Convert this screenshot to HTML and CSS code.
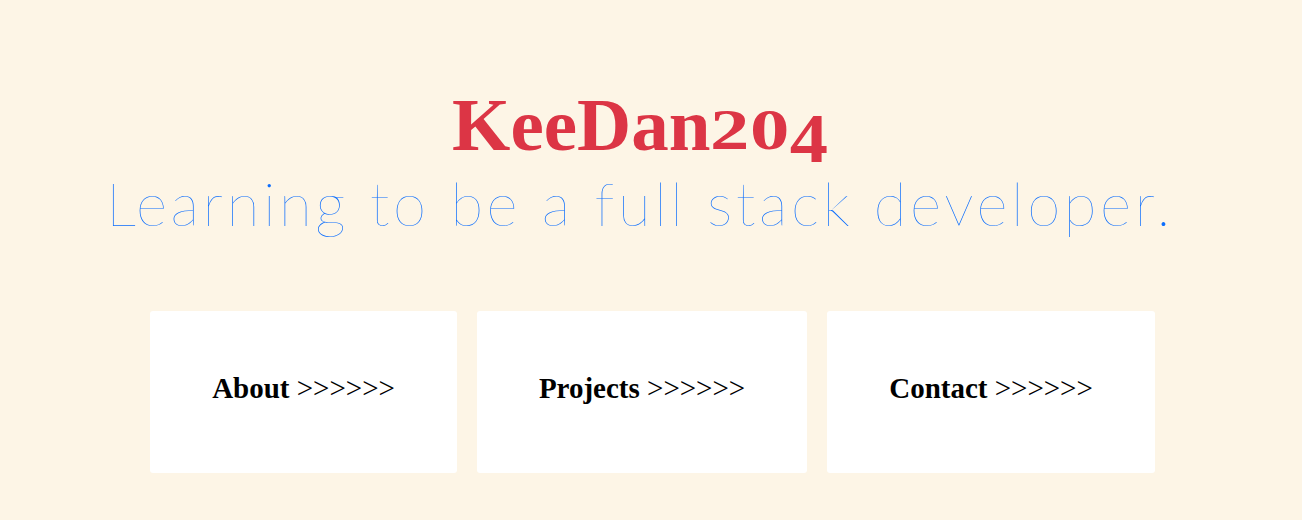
FILE: index.html
```html
<!DOCTYPE html>
<html lang="en">
<head>
<meta charset="utf-8">
<title>KeeDan204</title>
<link rel="stylesheet" href="styles.css">
</head>
<body>
<main class="page">
  <header class="hero">
    <h1 class="title">KeeDan<span class="os os-small">2</span><span class="os os-small">0</span><span class="os os-four">4</span></h1>
    <p class="tagline">Learning to be a full stack developer.</p>
  </header>
  <nav class="cards">
    <a class="card" href="#about"><span class="card-label"><strong class="card-word">About</strong> &gt;&gt;&gt;&gt;&gt;&gt;</span></a>
    <a class="card" href="#projects"><span class="card-label"><strong class="card-word">Projects</strong> &gt;&gt;&gt;&gt;&gt;&gt;</span></a>
    <a class="card" href="#contact"><span class="card-label"><strong class="card-word">Contact</strong> &gt;&gt;&gt;&gt;&gt;&gt;</span></a>
  </nav>
</main>
</body>
</html>
```
FILE: styles.css
```css
html, body {
  margin: 0;
  padding: 0;
}
body {
  background: #fdf5e6;
  font-family: "Liberation Serif", "Times New Roman", serif;
  color: #000;
}
.page {
  display: flex;
  flex-direction: column;
  align-items: center;
  padding-top: 83px;
}
.hero {
  display: flex;
  flex-direction: column;
  align-items: center;
  padding-right: 22px;
}
.title {
  margin: 0;
  font-family: "Liberation Serif", serif;
  font-weight: 700;
  font-size: 75px;
  line-height: 84px;
  color: #dc3545;
}
.os {
  display: inline-block;
  line-height: 0.6;
  transform-origin: 50% 100%;
}
.os-small {
  transform: scale(1.05, 0.75);
  margin: 0 1px;
}
.os-four {
  transform: translateY(12px) scale(1.02, 0.94);
  margin-left: 1px;
}
.tagline {
  margin: 2px 0 0;
  font-family: Lato, "Open Sans", sans-serif;
  font-weight: 100;
  font-size: 60px;
  line-height: 68px;
  letter-spacing: 3.6px;
  color: #0d6efd;
}
.cards {
  display: flex;
  justify-content: center;
  gap: 20px;
  margin-top: 74px;
  padding-left: 3px;
}
.card {
  display: flex;
  align-items: center;
  justify-content: center;
  height: 162px;
  box-sizing: border-box;
  padding: 0 62px 7px;
  background: #fff;
  border-radius: 3px;
  text-decoration: none;
  color: #000;
}
.card-label {
  font-family: "Liberation Serif", serif;
  font-size: 29px;
  white-space: nowrap;
}
.card-word {
  font-weight: 700;
}
```
